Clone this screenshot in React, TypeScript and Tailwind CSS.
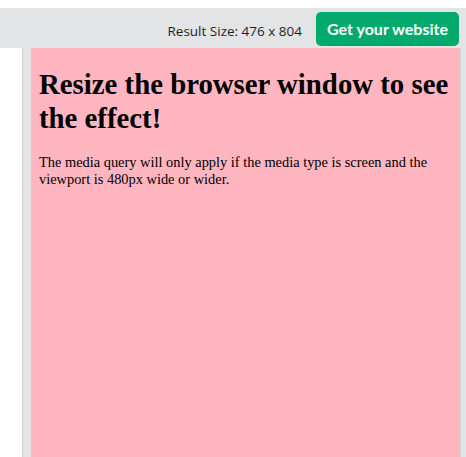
export default function App() {
  return (
    <div className="flex h-[457px] w-[466px] flex-col overflow-hidden bg-white">
      <div className="h-[8px] bg-white" />
      <div className="flex h-[40px] items-start justify-end bg-[#e3e4e6] pr-[7px] pt-[4px]">
        <span
          className="mr-[14px] mt-[9px] text-[13.5px] text-[#1f1f1f]"
          style={{ fontFamily: "'Open Sans', sans-serif" }}
        >
          Result Size: 476 x 804
        </span>
        <button
          className="h-[34px] w-[143px] rounded-[5px] bg-[#04aa6d] text-[16px] font-bold text-white"
          style={{ fontFamily: "Lato, sans-serif" }}
        >
          Get your website
        </button>
      </div>
      <div className="flex flex-1">
        <div className="w-[22px] bg-white" />
        <div className="flex flex-1 border-l border-[#cfd0d2] bg-[#e3e4e6] pl-[8px] pr-[5px]">
          <div
            className="flex-1 border-r border-[#d6d7d9] bg-[#ffb6c1] px-[8px] text-black"
            style={{ fontFamily: "'Liberation Serif', serif" }}
          >
            <h1 className="mt-[19px] text-[28.8px] font-bold leading-[34px]">
              Resize the browser window to see the effect!
            </h1>
            <p className="mt-[19px] text-[14.4px] leading-[17px]">
              The media query will only apply if the media type is screen and the viewport is 480px wide or wider.
            </p>
          </div>
        </div>
      </div>
    </div>
  );
}
